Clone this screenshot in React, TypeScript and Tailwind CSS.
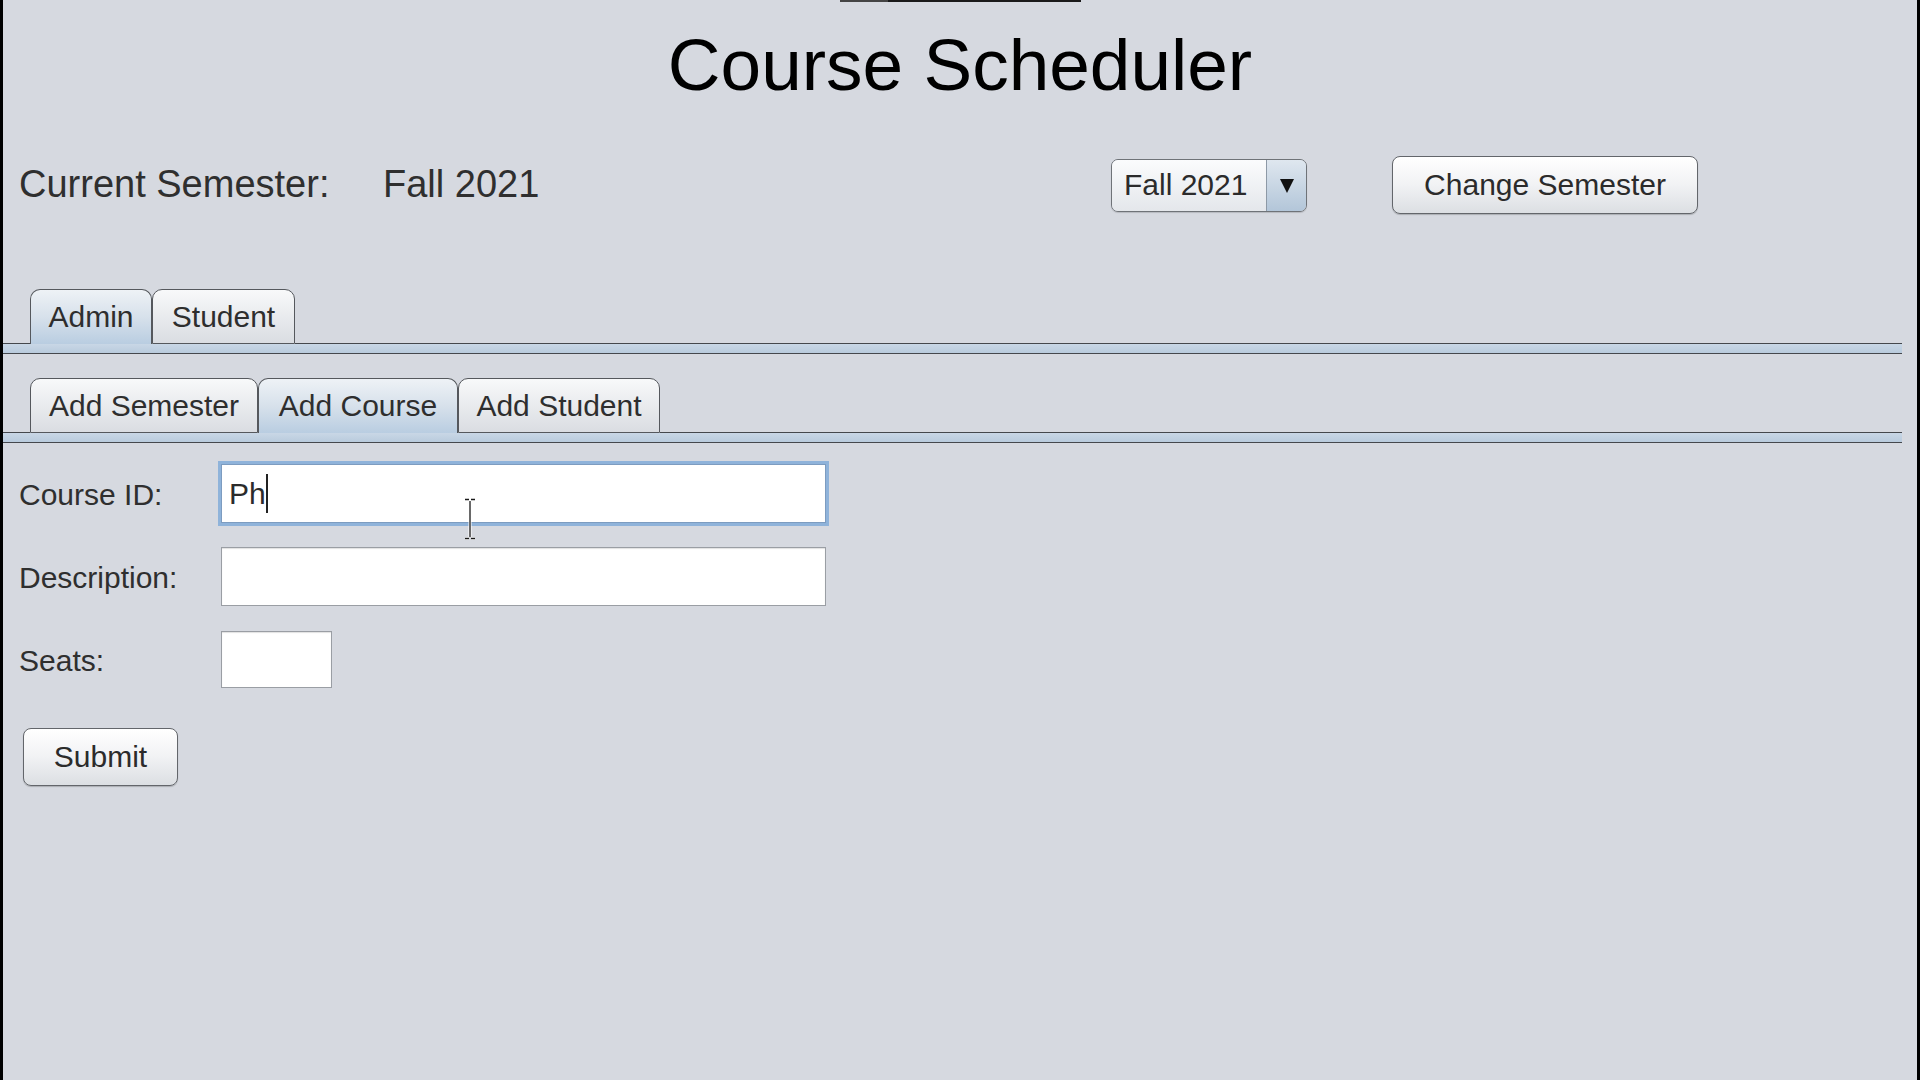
import React from "react";

const FONT = "font-['Liberation_Sans',Arial,sans-serif]";

function Tab({ label, selected, w }: { label: string; selected?: boolean; w: string }) {
  return (
    <div
      className={`${w} h-[55px] flex items-center justify-center rounded-t-[10px] border-l border-t border-r border-[#55585d] text-[30px] leading-none text-[#2e2e2e] ${
        selected
          ? "bg-gradient-to-b from-[#eef2f6] via-[#d7e1eb] to-[#b9cde1]"
          : "bg-gradient-to-b from-[#f8f9fa] to-[#dadde2] border-b"
      }`}
    >
      <span>{label}</span>
    </div>
  );
}

function Band() {
  return <div className="h-[10px] bg-gradient-to-b from-[#c9d7e6] to-[#b9cbdd] border-b border-[#45484d]" />;
}

function Filler({ w }: { w: string }) {
  return <div className={`${w} border-b border-[#45484d]`} />;
}

export default function App() {
  return (
    <div className={`${FONT} w-[1920px] h-[1080px] bg-[#d6d9e0] border-l-[3px] border-r-[3px] border-black overflow-hidden`}>
      <div className="ml-[837px] w-[241px] h-[2px] flex">
        <div className="w-[48px] bg-[#444]" />
        <div className="flex-1 bg-[#1a1a1a]" />
      </div>

      <div className="mt-[26px] text-center text-[73px] leading-none text-black">Course Scheduler</div>

      <div className="mt-[55px] h-[58px] flex items-center">
        <div className="w-[380px] pl-[16px] text-[38px] leading-none text-[#2f2f2f]">
          <span className="block mb-[3px]">Current Semester:</span>
        </div>
        <div className="w-[728px] text-[38px] leading-none text-[#2f2f2f]">
          <span className="block mb-[3px]">Fall 2021</span>
        </div>
        <div className="w-[196px] h-[53px] flex rounded-[7px] border border-[#6f7378] overflow-hidden shadow-[0_1px_1px_rgba(0,0,0,0.15)]">
          <div className="flex-1 bg-gradient-to-b from-[#fbfcfd] to-[#e4e7eb] flex items-center pl-[12px] text-[30px] leading-none text-[#2b2b2b]">
            Fall 2021
          </div>
          <div className="w-[40px] border-l border-[#8d99a6] bg-gradient-to-b from-[#dfe7ef] to-[#b3c6d9] flex items-center justify-center">
            <svg width="14" height="15" viewBox="0 0 14 15">
              <polygon points="0,1 14,1 7,15" fill="#111" />
            </svg>
          </div>
        </div>
        <div className="ml-[85px] w-[306px] h-[58px] flex items-center justify-center rounded-[8px] border border-[#63666b] bg-gradient-to-b from-[#ffffff] via-[#f1f2f4] to-[#dcdfe3] shadow-[0_1px_1px_rgba(0,0,0,0.2)] text-[30px] leading-none text-[#2b2b2b]">
          Change Semester
        </div>
      </div>

      <div className="w-[1899px] mt-[75px]">
        <div className="flex items-end">
          <Filler w="w-[27px] self-stretch" />
          <Tab label="Admin" selected w="w-[122px]" />
          <Tab label="Student" w="w-[143px]" />
          <Filler w="flex-1 self-stretch" />
        </div>
        <Band />

        <div className="mt-[24px] flex items-end">
          <Filler w="w-[27px] self-stretch" />
          <Tab label="Add Semester" w="w-[228px]" />
          <Tab label="Add Course" selected w="w-[200px]" />
          <Tab label="Add Student" w="w-[202px]" />
          <Filler w="flex-1 self-stretch" />
        </div>
        <Band />
      </div>

      <div className="mt-[21px] pl-[16px] grid grid-cols-[202px_auto] gap-y-[24px] auto-rows-[59px] items-center text-[30px] leading-none text-[#2f2f2f]">
        <div className="mt-[2px]">Course ID:</div>
        <div className="relative w-[605px] h-[59px] bg-white border border-[#7d9cc0] ring-[3px] ring-[#8fb3da] flex items-center pl-[7px]">
          <span className="text-[#2b2b2b]">Ph</span>
          <span className="inline-block w-[2px] h-[39px] bg-[#222]" />
          <svg className="absolute left-[240px] top-[33px]" width="16" height="42" viewBox="0 0 16 42">
            <path d="M3 1.5 H7 M9 1.5 H13 M8 3 V39 M3 40.5 H7 M9 40.5 H13" stroke="#fff" strokeWidth="3" fill="none" />
            <path d="M3 1.5 H7 M9 1.5 H13 M8 3 V39 M3 40.5 H7 M9 40.5 H13" stroke="#1a1a1a" strokeWidth="1.3" fill="none" />
          </svg>
        </div>

        <div className="mt-[2px]">Description:</div>
        <div className="w-[605px] h-[59px] bg-white border border-[#9a9ea4] shadow-[inset_0_1px_1px_rgba(0,0,0,0.12)]" />

        <div className="mt-[2px]">Seats:</div>
        <div className="w-[111px] h-[57px] bg-white border border-[#9a9ea4] shadow-[inset_0_1px_1px_rgba(0,0,0,0.12)]" />
      </div>

      <div className="mt-[39px] ml-[20px] w-[155px] h-[58px] flex items-center justify-center rounded-[8px] border border-[#63666b] bg-gradient-to-b from-[#ffffff] via-[#f1f2f4] to-[#dcdfe3] shadow-[0_1px_1px_rgba(0,0,0,0.2)] text-[30px] leading-none text-[#2b2b2b]">
        Submit
      </div>
    </div>
  );
}
